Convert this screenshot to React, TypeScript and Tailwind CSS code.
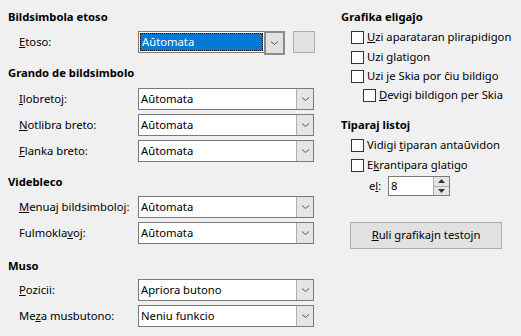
import React from "react";

const font = { fontFamily: '"Noto Sans", "Open Sans", sans-serif' };

function Chevron() {
  return (
    <svg width="9" height="6" viewBox="0 0 9 6" className="block">
      <path d="M1 1.5 L4.5 4.5 L8 1.5" fill="none" stroke="#555" strokeWidth="1" />
    </svg>
  );
}

function Select({ value, focused = false, width = "w-[176px]" }: { value: string; focused?: boolean; width?: string }) {
  if (focused) {
    return (
      <div className={`flex h-[22px] ${width} border border-[#7a7a7a] bg-white`}>
        <div className="flex-1 m-[1px] bg-[#0078d7] border border-dotted border-black text-white flex items-center pl-[1px] leading-none">
          {value}
        </div>
        <div className="w-[17px] h-full border-2 border-[#8a8a8a] bg-[#e1e1e1] flex items-center justify-center -my-[1px] -mr-[1px] box-content">
          <Chevron />
        </div>
      </div>
    );
  }
  return (
    <div className={`flex h-[22px] ${width} border border-[#7a7a7a] bg-white`}>
      <div className="flex-1 flex items-center pl-[2px] leading-none text-black">{value}</div>
      <div className="w-[17px] border-l border-[#adadad] bg-[#e5e5e5] flex items-center justify-center">
        <Chevron />
      </div>
    </div>
  );
}

function Row({ label, value, className = "" }: { label: React.ReactNode; value: string; className?: string }) {
  return (
    <div className={`flex items-center h-[22px] ${className}`}>
      <div className="w-[130px] pl-[11px] whitespace-nowrap">{label}</div>
      <Select value={value} />
    </div>
  );
}

function Check({ label, className = "" }: { label: React.ReactNode; className?: string }) {
  return (
    <div className={`flex items-center h-[19px] ${className}`}>
      <div className="w-[13px] h-[13px] border border-[#333] bg-white mr-[3px]" />
      <span className="whitespace-nowrap">{label}</span>
    </div>
  );
}

const U = ({ children }: { children: React.ReactNode }) => (
  <span className="underline underline-offset-1">{children}</span>
);

export default function App() {
  return (
    <div className="w-[521px] h-[336px] bg-[#f0f0f0] text-[11.25px] text-black flex overflow-hidden" style={font}>
      <div className="w-[333px] pl-[8px]">
        <div className="font-bold mt-[9px] h-[16px] leading-[16px]">Bildsimbola etoso</div>
        <div className="flex items-center h-[22px] mt-[6px]">
          <div className="w-[130px] pl-[11px]">
            <U>E</U>toso:
          </div>
          <Select value="Aŭtomata" focused width="w-[147px]" />
          <div className="ml-[8px] w-[22px] h-[22px] border border-[#adadad] bg-[#e1e1e1]" />
        </div>

        <div className="font-bold mt-[12px] h-[16px] leading-[16px]">Grando de bildsimbolo</div>
        <Row className="mt-[7px]" label={<span><U>I</U>lobretoj:</span>} value="Aŭtomata" />
        <Row className="mt-[4px]" label={<span><U>N</U>otlibra breto:</span>} value="Aŭtomata" />
        <Row className="mt-[4px]" label={<span><U>F</U>lanka breto:</span>} value="Aŭtomata" />

        <div className="font-bold mt-[12px] h-[16px] leading-[16px]">Videbleco</div>
        <Row className="mt-[6px]" label={<span><U>M</U>enuaj bildsimboloj:</span>} value="Aŭtomata" />
        <Row className="mt-[4px]" label={<span>Fulmokla<U>v</U>oj:</span>} value="Aŭtomata" />

        <div className="font-bold mt-[14px] h-[16px] leading-[16px]">Muso</div>
        <Row className="mt-[5px]" label={<span><U>P</U>ozicii:</span>} value="Apriora butono" />
        <Row className="mt-[4px]" label={<span>Me<U>z</U>a musbutono:</span>} value="Neniu funkcio" />
      </div>

      <div className="flex-1 pl-[8px]">
        <div className="font-bold mt-[9px] h-[16px] leading-[16px]">Grafika eligaĵo</div>
        <div className="pl-[10px] mt-[3px]">
          <Check label={<span><U>U</U>zi aparataran plirapidigon</span>} />
          <Check className="mt-[1px]" label={<span>Uzi <U>g</U>latigon</span>} />
          <Check label={<span>Uzi <U>j</U>e Skia por ĉiu bildigo</span>} />
          <Check className="pl-[12px]" label={<span><U>D</U>evigi bildigon per Skia</span>} />
        </div>

        <div className="font-bold mt-[12px] h-[16px] leading-[16px]">Tiparaj listoj</div>
        <div className="pl-[10px] mt-[3px]">
          <Check label={<span>Vidigi <U>t</U>iparan antaŭvidon</span>} />
          <Check className="mt-[1px]" label={<span>E<U>k</U>rantipara glatigo</span>} />
          <div className="flex items-center h-[20px] mt-[1px] pl-[18px]">
            <span className="w-[19px]">e<U>l</U>:</span>
            <div className="flex h-[20px] w-[62px] border border-[#7a7a7a] bg-white">
              <div className="flex-1 flex items-center pl-[2px] leading-none">8</div>
              <div className="w-[16px] flex flex-col border-l border-[#adadad]">
                <div className="flex-1 bg-[#e5e5e5] border-b border-[#adadad] flex items-center justify-center">
                  <svg width="7" height="4" viewBox="0 0 7 4"><path d="M0 4 L3.5 0 L7 4Z" fill="#333" /></svg>
                </div>
                <div className="flex-1 bg-[#e5e5e5] flex items-center justify-center">
                  <svg width="7" height="4" viewBox="0 0 7 4"><path d="M0 0 L3.5 4 L7 0Z" fill="#333" /></svg>
                </div>
              </div>
            </div>
          </div>
        </div>

        <div className="mt-[26px] ml-[9px] w-[152px] h-[27px] border border-[#adadad] bg-[#e1e1e1] flex items-center justify-center">
          <span><U>R</U>uli grafikajn testojn</span>
        </div>
      </div>
    </div>
  );
}
